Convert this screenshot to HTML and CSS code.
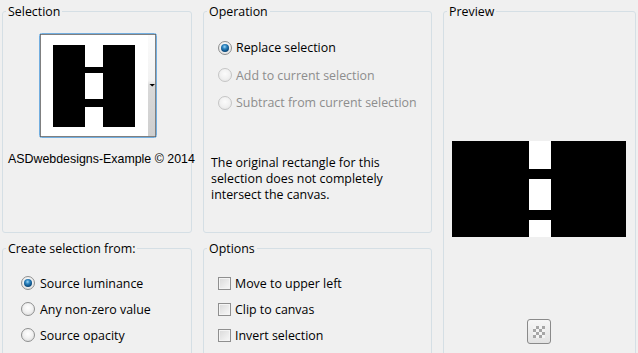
FILE: index.html
```html
<!DOCTYPE html>
<html lang="en">
<head>
    <meta charset="UTF-8">
    <meta name="viewport" content="width=device-width, initial-scale=1.0">
    <title>Selection from mask</title>
    <link rel="stylesheet" href="styles.css">
</head>
<body>
    <div class="dialog">
        <fieldset class="group selection">
            <legend>Selection</legend>
            <div class="thumb">
                <svg width="118" height="105" viewBox="0 0 118 105">
                    <defs>
                        <linearGradient id="strip" x1="0" y1="0" x2="0" y2="1">
                            <stop offset="0" stop-color="#fbfbfb"/>
                            <stop offset="0.45" stop-color="#f2f2f2"/>
                            <stop offset="0.5" stop-color="#d9d9d9"/>
                            <stop offset="1" stop-color="#cfcfcf"/>
                        </linearGradient>
                    </defs>
                    <rect x="0.5" y="0.5" width="117" height="104" rx="2" fill="#fff" stroke="#72aee0"/>
                    <rect x="109" y="2" width="7" height="101" fill="url(#strip)"/>
                    <rect x="1.5" y="1.5" width="115" height="102" fill="none" stroke="#000" stroke-dasharray="1 1"/>
                    <rect x="14" y="12" width="32" height="82" fill="#000"/>
                    <rect x="64" y="12" width="32" height="82" fill="#000"/>
                    <rect x="46" y="34" width="18" height="6" fill="#000"/>
                    <rect x="46" y="66" width="18" height="8" fill="#000"/>
                    <polygon points="110.5,51 116,51 113.25,53.5" fill="#000"/>
                </svg>
            </div>
            <p class="caption">ASDwebdesigns-Example © 2014</p>
        </fieldset>

        <fieldset class="group operation">
            <legend>Operation</legend>
            <label class="option"><span class="radio checked"></span>Replace selection</label>
            <label class="option disabled"><span class="radio"></span>Add to current selection</label>
            <label class="option disabled"><span class="radio"></span>Subtract from current selection</label>
            <p class="note">The original rectangle for this<br>selection does not completely<br>intersect the canvas.</p>
        </fieldset>

        <fieldset class="group preview">
            <legend>Preview</legend>
            <svg class="preview-image" width="174" height="96" viewBox="0 0 174 96">
                <rect width="174" height="96" fill="#000"/>
                <rect x="77" y="0" width="22" height="28" fill="#fff"/>
                <rect x="77" y="38" width="22" height="31" fill="#fff"/>
                <rect x="77" y="79" width="22" height="17" fill="#fff"/>
            </svg>
            <span class="checker-btn"><span class="checker"></span></span>
        </fieldset>

        <fieldset class="group source">
            <legend>Create selection from:</legend>
            <label class="option"><span class="radio checked"></span>Source luminance</label>
            <label class="option"><span class="radio"></span>Any non-zero value</label>
            <label class="option"><span class="radio"></span>Source opacity</label>
        </fieldset>

        <fieldset class="group options">
            <legend>Options</legend>
            <label class="option"><span class="check"></span>Move to upper left</label>
            <label class="option"><span class="check"></span>Clip to canvas</label>
            <label class="option"><span class="check"></span>Invert selection</label>
        </fieldset>
    </div>
</body>
</html>
```

FILE: styles.css
```css
body {
    margin: 0;
    background-color: #f0f0f0;
    font-family: "Open Sans", "Noto Sans", sans-serif;
    font-size: 12.4px;
    color: #000;
    overflow: hidden;
}
.dialog {
    display: grid;
    grid-template-columns: 190px 229px 193px;
    grid-template-rows: 229px 120px;
    column-gap: 11px;
    row-gap: 8px;
    padding: 4px 0 0 2px;
}
.group {
    margin: 0;
    padding: 0;
    min-width: 0;
    border: 1px solid #d5dfe5;
    border-radius: 3px;
}
.group legend {
    margin-left: 3px;
    padding: 0 2px;
    line-height: 15px;
}
.preview {
    grid-row: span 2;
}
.thumb {
    width: 118px;
    height: 105px;
    margin: 14px 0 0 36px;
}
.thumb svg {
    display: block;
}
.caption {
    margin: 14px 0 0 5px;
    font-family: "Liberation Sans", Arial, sans-serif;
    line-height: 15px;
    white-space: nowrap;
}
.option {
    display: flex;
    align-items: center;
    gap: 4px;
    height: 27.5px;
}
.operation .option {
    padding-left: 14px;
}
.operation .option:first-of-type {
    margin-top: 15px;
}
.source .option,
.options .option {
    height: 26px;
}
.source .option {
    padding-left: 18px;
    gap: 5px;
}
.source .option:first-of-type,
.options .option:first-of-type {
    margin-top: 14px;
}
.options .option {
    padding-left: 14px;
}
.option.disabled {
    color: #8d8d8d;
}
.radio {
    position: relative;
    box-sizing: border-box;
    width: 14px;
    height: 14px;
    border-radius: 50%;
    border: 1px solid #8e8f8f;
    background: radial-gradient(circle at 50% 40%, #ffffff 0%, #f2f2f2 45%, #d6d6d6 100%);
    flex-shrink: 0;
}
.option.disabled .radio {
    border-color: #c5c5c5;
    background: radial-gradient(circle at 50% 40%, #fbfbfb 0%, #f1f1f1 50%, #e2e2e2 100%);
}
.radio.checked::after {
    content: "";
    position: absolute;
    left: 2px;
    top: 2px;
    width: 8px;
    height: 8px;
    border-radius: 50%;
    background: radial-gradient(circle at 45% 35%, #a0d8f5 0%, #2f86c2 30%, #0b4f84 65%, #06304f 100%);
}
.check {
    box-sizing: border-box;
    width: 13px;
    height: 13px;
    border: 1px solid #8f8f8f;
    box-shadow: inset 0 0 0 1px #f4f4f4;
    background: linear-gradient(135deg, #d9d9d9 0%, #ececec 60%, #f8f8f8 100%);
    flex-shrink: 0;
}
.note {
    margin: 38px 0 0 7px;
    line-height: 16px;
}
.preview-image {
    display: block;
    margin: 122px 0 0 8px;
}
.checker-btn {
    display: flex;
    align-items: center;
    justify-content: center;
    box-sizing: border-box;
    width: 24px;
    height: 25px;
    margin: 82px 0 0 83px;
    border: 1px solid #8a8a8a;
    border-radius: 3px;
    background: linear-gradient(#f6f6f6, #e2e2e2);
}
.checker {
    width: 12px;
    height: 12px;
    background: repeating-conic-gradient(#a6a6a6 0 25%, #f4f4f4 0 50%) 0 0 / 6px 6px;
}
```
